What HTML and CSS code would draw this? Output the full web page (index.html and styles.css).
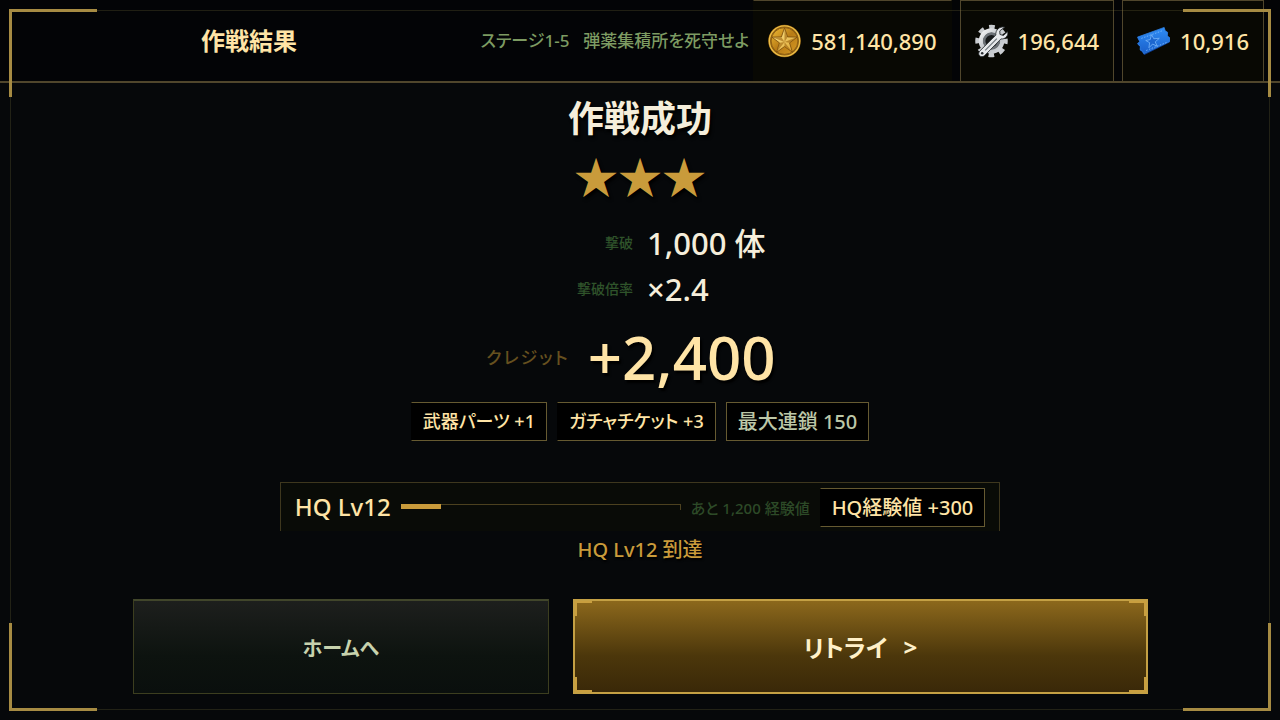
FILE: index.html
```html
<!DOCTYPE html>
<html lang="ja">
<head>
<meta charset="utf-8">
<meta name="viewport" content="width=device-width, initial-scale=1">
<title>作戦結果</title>
<link rel="stylesheet" href="styles.css">
</head>
<body>
<div class="screen">
  <header class="topbar">
    <h1 class="topbar-title">作戦結果</h1>
    <p class="stage"><span>ステージ1-5</span><span>弾薬集積所を死守せよ</span></p>
    <ul class="wallet">
      <li class="currency currency-open">
        <svg class="icon" viewBox="0 0 34 34" aria-hidden="true">
          <defs>
            <linearGradient id="coin" x1="0" y1="0" x2="1" y2="1"><stop offset="0" stop-color="#f0bd36"/><stop offset=".5" stop-color="#b87b15"/><stop offset="1" stop-color="#d79a24"/></linearGradient>
            <linearGradient id="coinstar" x1="0" y1="0" x2="1" y2="1"><stop offset="0" stop-color="#ffec94"/><stop offset="1" stop-color="#dba02a"/></linearGradient>
          </defs>
          <circle cx="17" cy="17" r="16.800" fill="#8a5c12"/>
          <circle cx="17" cy="17" r="15.600" fill="none" stroke="#edbd45" stroke-width="1.500"/>
          <circle cx="17" cy="17" r="13.800" fill="url(#coin)" stroke="#8d5e12"/>
          <path d="M17 3.500l3.200 9.300 9.800.200-7.800 5.900 2.900 9.600-8.100-5.800-8.100 5.800 2.900-9.600L4 13l9.800-.200z" fill="url(#coinstar)" stroke="#744709" stroke-width=".8"/>
          <path d="M17 4v14l3-4.700zM29.500 13.200L17 18l4.900.9zM24.800 28.200L17 18v4.600zM9.200 28.200L17 18l-4.900.9zM4.500 13.200L17 18l-3-4.700z" fill="#9b630d" opacity=".6"/>
        </svg>
        <span>581,140,890</span>
      </li>
      <li class="currency">
        <svg class="icon" viewBox="0 0 34 34" aria-hidden="true">
          <defs><linearGradient id="steel" x1="0" y1="0" x2="1" y2="1"><stop offset="0" stop-color="#f4f5f7"/><stop offset=".55" stop-color="#b9bdc2"/><stop offset="1" stop-color="#d5d8dc"/></linearGradient></defs>
          <circle cx="17" cy="17" r="14.500" fill="none" stroke="#c9ccd0" stroke-width="4.500" stroke-dasharray="5.800 5.590" stroke-dashoffset="2.900"/>
          <circle cx="17" cy="17" r="10.800" fill="none" stroke="url(#steel)" stroke-width="4.600"/>
          <circle cx="17" cy="17" r="7.600" fill="#16181a" stroke="#6c7177" stroke-width="2.600"/>
          <path d="M30.500 2.800l-5 3.800.2 3.600 3.400 1.200 4.600-3.900c.8 4.200-2.500 7.800-7 7.400L9.900 32c-1.500 1.500-3.800 1.500-5.100.2-1.400-1.400-1.200-3.600.3-5L21.500 10.900c-.9-4.800 4-9.600 9-8.100z" fill="#e6e8eb" stroke="#2b2f33" stroke-width=".9"/>
          <path d="M10.500 26.700L22.500 14.600" stroke="#72787f" stroke-width="1.300"/>
          <circle cx="7.400" cy="29.600" r="1.300" fill="#292d31"/>
        </svg>
        <span>196,644</span>
      </li>
      <li class="currency">
        <svg class="icon" viewBox="0 0 34 34" aria-hidden="true">
          <defs><linearGradient id="ticket" x1="0" y1="0" x2="0" y2="1"><stop offset="0" stop-color="#2f8df5"/><stop offset="1" stop-color="#1a5fca"/></linearGradient></defs>
          <path d="M.5 14.500L28.500 4.500l1 3 2 1.500 0 3.500 2.500 3-.5 3L7.500 31.500 5 28l-1.800-1 .3-3.500-3-3 2.500-2z" fill="#0d3c91"/>
          <path d="M.5 13L28 3l1 3.500 2.500 1.500-.3 3.700 2.800 2.300-.5 3.500L7 30l-1.500-3-2.300-1 .3-3.500-3-2.800 2.500-2.200z" fill="url(#ticket)" stroke="#2e80e4" stroke-width=".8"/>
          <path d="M4.500 14.300l22-8M9.500 26.800l21-8.300" stroke="#7bb9fb" stroke-width=".9" stroke-dasharray="1.500 1.500"/>
          <path d="M15 10.500l2.300 4.200 5.700-.5-4.200 3.700 2 4.600-4.700-2.400-3.800 3.800.7-5.200-4-2.200 4.600-.9z" fill="#1c66cf" stroke="#7bb9fb" stroke-width=".8"/>
        </svg>
        <span>10,916</span>
      </li>
    </ul>
  </header>

  <main class="result">
    <h2 class="verdict">作戦成功</h2>
    <div class="stars" role="img" aria-label="星3つ">★★★</div>
    <dl class="stats">
      <dt>撃破</dt><dd>1,000 体</dd>
      <dt>撃破倍率</dt><dd>×2.4</dd>
    </dl>
    <div class="credit">
      <span class="credit-label">クレジット</span>
      <strong class="credit-value">+2,400</strong>
    </div>
    <ul class="rewards">
      <li class="tag tag-open tag-item">武器パーツ +1</li>
      <li class="tag tag-open tag-item">ガチャチケット +3</li>
      <li class="tag tag-muted">最大連鎖 150</li>
    </ul>
    <section class="hq" aria-label="HQ レベル">
      <span class="hq-level">HQ Lv12</span>
      <div class="meter"><div class="meter-fill"></div></div>
      <span class="hq-next">あと 1,200 経験値</span>
      <span class="tag tag-open">HQ経験値 +300</span>
    </section>
    <p class="reached">HQ Lv12 到達</p>
  </main>

  <nav class="actions">
    <button class="btn btn-home" type="button">ホームへ</button>
    <button class="btn btn-retry" type="button">
      <span>リトライ</span><span>&gt;</span>
      <i class="notch notch-tl"></i><i class="notch notch-tr"></i><i class="notch notch-bl"></i><i class="notch notch-br"></i>
    </button>
  </nav>

  <div class="frame" aria-hidden="true">
    <i class="corner corner-tl"></i><i class="corner corner-tr"></i><i class="corner corner-bl"></i><i class="corner corner-br"></i>
  </div>
</div>
</body>
</html>
```
FILE: styles.css
```css
* { box-sizing: border-box; }

body {
  margin: 0;
  background: #06080a;
  color: #ffe4a6;
  font-family: "Noto Sans", "Noto Sans CJK JP", sans-serif;
  font-weight: 500;
  font-feature-settings: "palt";
}

h1, h2, p, ul, dl, dd { margin: 0; padding: 0; font-weight: inherit; }
ul { list-style: none; }

.screen {
  position: relative;
  display: flex;
  flex-direction: column;
  min-height: 100vh;
  padding-bottom: 26px;
}

/* top bar */
.topbar {
  display: flex;
  align-items: center;
  height: 83px;
  padding: 0 16px 0 201px;
  background: #030406;
  border-bottom: 2px solid #50462c;
}
.topbar-title { font-size: 24px; font-weight: 700; line-height: 32px; }
.stage {
  display: flex;
  gap: 14px;
  margin-left: auto;
  color: #7d9b62;
  font-size: 17px;
  line-height: 24px;
  white-space: nowrap;
}
.wallet { display: flex; gap: 8px; align-self: stretch; margin-left: 4px; }
.currency {
  display: flex;
  align-items: center;
  gap: 10px;
  padding: 0 14px;
  background: #080803;
  border: 1px solid #50462c;
  border-bottom: 0;
  font-size: 22px;
  line-height: 30px;
}
.currency-open { border-left-color: transparent; border-right-color: transparent; }
.icon { width: 33px; height: 34px; }

/* outcome */
.result {
  display: flex;
  flex-direction: column;
  align-items: center;
  flex: 1;
}
.verdict {
  margin-top: 8px;
  color: #f5eedb;
  font-size: 36px;
  font-weight: 700;
  line-height: 56px;
  text-shadow: 2px 3px 3px #000;
}
.stars {
  color: #c99b3b;
  font-family: "Noto Sans CJK JP", sans-serif;
  font-feature-settings: normal;
  font-size: 44px;
  line-height: 56px;
  text-shadow: 2px 3px 3px #000;
}
.stats {
  display: grid;
  grid-template-columns: 120px 120px;
  grid-auto-rows: 46px;
  align-items: center;
  column-gap: 14px;
  margin-top: 18px;
}
.stats dt { padding-bottom: 4px; color: #2f532a; font-size: 14px; text-align: right; }
.stats dd { padding-bottom: 2px; color: #f5eedb; font-size: 31px; line-height: 44px; white-space: nowrap; }
.credit { display: flex; align-items: center; gap: 18px; margin-top: 4px; padding-right: 18px; }
.credit-label { padding-bottom: 2px; color: #66501f; font-size: 17px; letter-spacing: 2px; }
.credit-value { font-size: 60px; font-weight: 500; line-height: 80px; text-shadow: 2px 3px 2px #000; }

.rewards { display: flex; gap: 10px; margin-top: 5px; }
.tag {
  padding: 0 11px;
  background: #000;
  border: 1px solid #665a31;
  font-size: 20px;
  line-height: 37px;
  white-space: nowrap;
}
.tag-open { border-left-color: #000; }
.tag-item { font-size: 18px; }
.tag-muted { color: #bcc7a7; }

/* headquarters progress */
.hq {
  display: flex;
  align-items: center;
  gap: 10px;
  margin-top: 41px;
  padding: 4px 14px;
  background: #090b07;
  border: 1px solid #3e371e;
  border-bottom: 0;
}
.hq-level { font-size: 24px; line-height: 40px; }
.meter {
  width: 280px;
  height: 6px;
  border-top: 1px solid #4c411f;
  border-right: 1px solid #4c411f;
}
.meter-fill { width: 40px; height: 5px; margin-top: -1px; background: #c99b3b; }
.hq-next { color: #2d4a27; font-size: 15px; }
.reached { margin-top: 5px; color: #c99b3b; font-size: 20px; line-height: 28px; text-shadow: 1px 2px 2px #000; }

/* buttons */
.actions {
  display: grid;
  grid-template-columns: 13fr 18fr;
  gap: 24px;
  padding: 0 132px 0 133px;
}
.btn {
  display: flex;
  align-items: center;
  justify-content: center;
  height: 95px;
  padding: 0;
  font: inherit;
  font-feature-settings: inherit;
}
.btn-home {
  background: linear-gradient(#1d1f1d, #0d130f 60%, #0a0f0d);
  border: 1px solid #3c3e1f;
  border-top: 2px solid #41462b;
  color: #c7d2ad;
  font-size: 20px;
  font-weight: 700;
}
.btn-retry {
  position: relative;
  gap: 16px;
  background: linear-gradient(#8c681c, #4c370b 60%, #3a2808);
  border: 2px solid #c4a044;
  color: #fff0c8;
  font-size: 24px;
  font-weight: 700;
}
.notch { position: absolute; width: 17px; height: 15px; border: 0 solid #c99f3f; }
.notch-tl { top: 0; left: 0; border-width: 2px 0 0 2px; }
.notch-tr { top: 0; right: 0; border-width: 2px 2px 0 0; }
.notch-bl { bottom: 0; left: 0; border-width: 0 0 2px 2px; }
.notch-br { bottom: 0; right: 0; border-width: 0 2px 2px 0; }

/* screen frame */
.frame { position: absolute; inset: 10px; border: 1px solid rgba(120, 110, 60, .25); pointer-events: none; }
.corner { position: absolute; width: 88px; height: 88px; border: 0 solid #a68b43; }
.corner-tl { top: -2px; left: -2px; border-width: 3px 0 0 3px; }
.corner-tr { top: -2px; right: -2px; border-width: 3px 3px 0 0; }
.corner-bl { bottom: -2px; left: -2px; border-width: 0 0 3px 3px; }
.corner-br { bottom: -2px; right: -2px; border-width: 0 3px 3px 0; }
```
